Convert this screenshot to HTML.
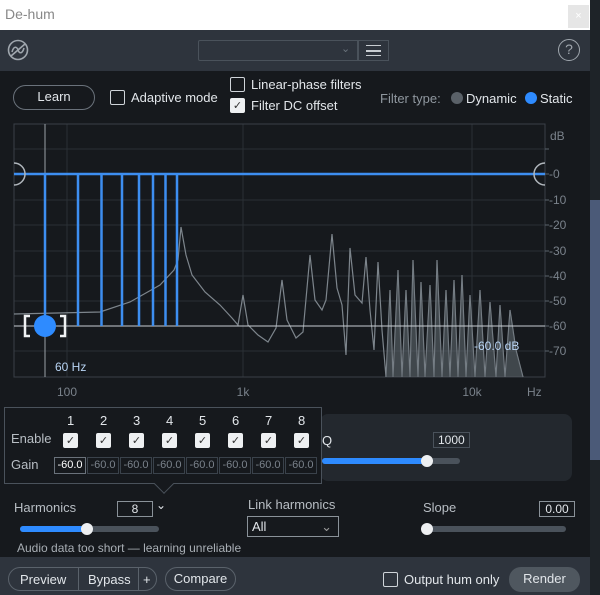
<!DOCTYPE html>
<html><head><meta charset="utf-8"><style>
*{box-sizing:border-box;margin:0;padding:0}
body{width:600px;height:595px;overflow:hidden;background:#3a4048;font-family:"Liberation Sans",sans-serif;position:relative;color:#d8dde3}
.abs{position:absolute}
.t{font-size:13px;color:#e2e6ea;white-space:nowrap}
.cb{position:absolute;width:15px;height:15px;border:1.5px solid #cfd4d9;border-radius:2px}
.cbk{background:#eef0f2;border-color:#eef0f2;color:#333;font-size:11px;text-align:center;line-height:14px}
.g{position:absolute;font-size:11px;color:#7a828b;width:32px;height:17px;border:1px solid #3a424b;text-align:center;line-height:15px}
</style></head><body>
<div class="abs" style="left:0;top:0;width:590px;height:30px;background:#fff"></div>
<div class="abs t" style="left:5px;top:6px;color:#888;font-size:14px">De-hum</div>
<div class="abs" style="left:568px;top:5px;width:21px;height:23px;background:#e6e6e6;color:#fff;font-size:11px;text-align:center;line-height:23px">×</div>
<div class="abs" style="left:590px;top:0;width:10px;height:595px;background:#1e2328"></div>
<div class="abs" style="left:590px;top:200px;width:10px;height:260px;background:#4b5a78"></div>
<div class="abs" style="left:0;top:30px;width:590px;height:565px;background:#16191d"></div>
<div class="abs" style="left:0;top:30px;width:590px;height:41px;background:#2e343d"></div>
<svg class="abs" style="left:7px;top:39px" width="22" height="22"><circle cx="11" cy="11" r="9.5" fill="none" stroke="#a0a7ae" stroke-width="1.6"/><path d="M4 17 L18 5 M5 13 C7 6 10 8 11 11 C12 14 15 16 17 9" fill="none" stroke="#a0a7ae" stroke-width="1.6"/></svg>
<div class="abs" style="left:198px;top:40px;width:160px;height:21px;border:1px solid #4a525b;border-radius:2px 0 0 2px"></div>
<div class="abs" style="left:341px;top:42px;color:#6a737c;font-size:11px">⌄</div>
<div class="abs" style="left:358px;top:40px;width:31px;height:21px;border:1px solid #4a525b"></div>
<div class="abs" style="left:366px;top:45px;width:15px;height:11px;border-top:1.5px solid #c8cdd2;border-bottom:1.5px solid #c8cdd2"></div>
<div class="abs" style="left:366px;top:50px;width:15px;height:1.5px;background:#c8cdd2"></div>
<div class="abs" style="left:558px;top:39px;width:22px;height:22px;border:1.5px solid #a0a7ae;border-radius:50%;color:#a0a7ae;font-size:14px;text-align:center;line-height:19px">?</div>

<div class="abs t" style="left:13px;top:85px;width:82px;height:25px;border:1.5px solid #6a727b;border-radius:13px;text-align:center;line-height:22px">Learn</div>
<div class="cb" style="left:110px;top:90px"></div><div class="abs t" style="left:131px;top:90px">Adaptive mode</div>
<div class="cb" style="left:230px;top:77px"></div><div class="abs t" style="left:251px;top:77px">Linear-phase filters</div>
<div class="cb cbk" style="left:230px;top:98px">✓</div><div class="abs t" style="left:251px;top:98px">Filter DC offset</div>
<div class="abs t" style="left:380px;top:91px;color:#8f979f">Filter type:</div>
<div class="abs" style="left:451px;top:92px;width:12px;height:12px;border-radius:50%;background:#5a6168"></div>
<div class="abs t" style="left:466px;top:91px">Dynamic</div>
<div class="abs" style="left:525px;top:92px;width:12px;height:12px;border-radius:50%;background:#2e8bff"></div>
<div class="abs t" style="left:540px;top:91px">Static</div>

<svg class="abs" style="left:0;top:120px" width="590" height="280" font-family="Liberation Sans" font-size="11">
<g stroke="#2a2f35" stroke-width="1">
<line x1="14" y1="29" x2="545" y2="29"/><line x1="14" y1="80" x2="545" y2="80"/><line x1="14" y1="105" x2="545" y2="105"/><line x1="14" y1="131" x2="545" y2="131"/><line x1="14" y1="156" x2="545" y2="156"/><line x1="14" y1="181" x2="545" y2="181"/><line x1="14" y1="231" x2="545" y2="231"/>
<line x1="67" y1="4" x2="67" y2="257"/><line x1="243" y1="4" x2="243" y2="257"/><line x1="472" y1="4" x2="472" y2="257"/>
</g>
<rect x="14" y="4" width="531" height="253" fill="none" stroke="#3a4048"/>
<g stroke="#5a626b"><line x1="545" y1="29" x2="549" y2="29"/><line x1="545" y1="54" x2="549" y2="54"/><line x1="545" y1="80" x2="549" y2="80"/><line x1="545" y1="105" x2="549" y2="105"/><line x1="545" y1="131" x2="549" y2="131"/><line x1="545" y1="156" x2="549" y2="156"/><line x1="545" y1="181" x2="549" y2="181"/><line x1="545" y1="206" x2="549" y2="206"/><line x1="545" y1="231" x2="549" y2="231"/></g>
<g fill="#7a828b" text-anchor="start" font-size="12"><text x="550" y="20">dB</text><text x="549" y="58">-0</text><text x="549" y="84">-10</text><text x="549" y="109">-20</text><text x="549" y="135">-30</text><text x="549" y="160">-40</text><text x="549" y="185">-50</text><text x="549" y="210">-60</text><text x="549" y="235">-70</text>
<text x="67" y="276" text-anchor="middle">100</text><text x="243" y="276" text-anchor="middle">1k</text><text x="472" y="276" text-anchor="middle">10k</text><text x="527" y="276">Hz</text></g>
<path d="M14 194 L100 192 L130 182 L160 165 L174 150 L178 140 L181 107 L186 135 L192 155 L205 172 L220 185 L232 198 L238 205 L243 175 L248 205 L258 215 L268 222 L276 208 L282 160 L287 200 L296 218 L303 212 L310 135 L315 180 L322 190 L326 180 L332 114 L337 168 L342 185 L346 235 L350 128 L355 175 L362 183 L366 137 L370 190 L374 230 L378 142 L382 210 L386 257 L390 170 L393 257 L398 150 L402 257 L406 170 L410 257 L413 140 L418 257 L421 162 L425 257 L430 165 L434 257 L437 140 L442 257 L446 170 L450 257 L454 160 L458 257 L462 155 L466 257 L470 175 L475 257 L480 170 L485 257 L490 182 L496 257 L500 185 L505 257 L510 190 L516 230 L523 257" fill="none" stroke="#7d858c" stroke-width="1.2"/>
<path d="M386 257 L390 170 L393 257 L398 150 L402 257 L406 170 L410 257 L413 140 L418 257 L421 162 L425 257 L430 165 L434 257 L437 140 L442 257 L446 170 L450 257 L454 160 L458 257 L462 155 L466 257 L470 175 L475 257 L480 170 L485 257 L490 182 L496 257 L500 185 L505 257 L510 190 L516 230 L523 257Z" fill="#5e666d" opacity="0.6"/>
<line x1="14" y1="206" x2="545" y2="206" stroke="#c8cdd2" stroke-width="1"/>
<line x1="45" y1="4" x2="45" y2="257" stroke="#9aa1a8" stroke-width="1"/>
<g stroke="#3d8ef0" stroke-width="2.5" fill="none">
<line x1="14" y1="54" x2="545" y2="54"/>
<path d="M45 54 V206 M78 54 V206 M101.5 54 V206 M122 54 V206 M139 54 V206 M153 54 V206 M165.5 54 V206 M177 54 V206"/>
</g>
<path d="M14 43 A11 11 0 0 1 14 65" fill="none" stroke="#b0b6bc" stroke-width="1.5"/>
<path d="M545 43 A11 11 0 0 0 545 65" fill="none" stroke="#b0b6bc" stroke-width="1.5"/>
<path d="M30 196 H25 V216 H30 M60 196 H65 V216 H60" fill="none" stroke="#f0f2f4" stroke-width="2.5"/>
<circle cx="45" cy="206" r="11" fill="#2e8bff"/>
<text x="55" y="251" fill="#b8d4f4" font-size="12">60 Hz</text>
<text x="474" y="230" fill="#b8d4f4" font-size="12">-60.0 dB</text>
</svg>

<div class="abs" style="left:320px;top:414px;width:252px;height:67px;background:#23282e;border-radius:8px"></div>
<div class="abs t" style="left:322px;top:433px">Q</div>
<div class="abs t" style="left:433px;top:432px;border:1px solid #4a525b;padding:0 4px;font-size:12px">1000</div>
<div class="abs" style="left:322px;top:458px;width:138px;height:6px;border-radius:3px;background:#4a525b"></div>
<div class="abs" style="left:322px;top:458px;width:106px;height:6px;border-radius:3px;background:#2e8bff"></div>
<div class="abs" style="left:421px;top:455px;width:12px;height:12px;border-radius:50%;background:#eef0f2;border:3px solid #eef0f2"></div>

<div class="abs" style="left:4px;top:407px;width:318px;height:77px;background:#16191d;border:1px solid #4a525b"></div>
<div class="abs" style="left:157px;top:477px;width:14px;height:14px;background:#16191d;border-right:1px solid #4a525b;border-bottom:1px solid #4a525b;transform:rotate(45deg)"></div>
<div class="abs t" style="left:11px;top:431px;color:#b8bec4">Enable</div>
<div class="abs t" style="left:11px;top:457px;color:#b8bec4">Gain</div>
<div class="abs t" style="left:67px;top:413px">1</div><div class="abs t" style="left:100px;top:413px">2</div><div class="abs t" style="left:133px;top:413px">3</div><div class="abs t" style="left:166px;top:413px">4</div><div class="abs t" style="left:199px;top:413px">5</div><div class="abs t" style="left:232px;top:413px">6</div><div class="abs t" style="left:265px;top:413px">7</div><div class="abs t" style="left:298px;top:413px">8</div>
<div class="cb cbk" style="left:63px;top:433px">✓</div><div class="cb cbk" style="left:96px;top:433px">✓</div><div class="cb cbk" style="left:129px;top:433px">✓</div><div class="cb cbk" style="left:162px;top:433px">✓</div><div class="cb cbk" style="left:195px;top:433px">✓</div><div class="cb cbk" style="left:228px;top:433px">✓</div><div class="cb cbk" style="left:261px;top:433px">✓</div><div class="cb cbk" style="left:294px;top:433px">✓</div>
<div class="g" style="left:54px;top:457px;color:#fff;border-color:#6a727b">-60.0</div><div class="g" style="left:87px;top:457px">-60.0</div><div class="g" style="left:120px;top:457px">-60.0</div><div class="g" style="left:153px;top:457px">-60.0</div><div class="g" style="left:186px;top:457px">-60.0</div><div class="g" style="left:219px;top:457px">-60.0</div><div class="g" style="left:252px;top:457px">-60.0</div><div class="g" style="left:285px;top:457px">-60.0</div>

<div class="abs t" style="left:14px;top:500px;color:#b8bec4">Harmonics</div>
<div class="abs t" style="left:117px;top:501px;width:36px;height:16px;border:1px solid #8a9299;text-align:center;line-height:14px;font-size:12px">8</div>
<div class="abs t" style="left:156px;top:498px;font-size:12px">⌄</div>
<div class="abs" style="left:20px;top:526px;width:139px;height:6px;border-radius:3px;background:#4a525b"></div>
<div class="abs" style="left:20px;top:526px;width:67px;height:6px;border-radius:3px;background:#2e8bff"></div>
<div class="abs" style="left:81px;top:523px;width:12px;height:12px;border-radius:50%;background:#eef0f2"></div>
<div class="abs t" style="left:17px;top:541px;color:#a8aeb4;font-size:12px">Audio data too short — learning unreliable</div>
<div class="abs t" style="left:248px;top:497px;color:#b8bec4">Link harmonics</div>
<div class="abs t" style="left:247px;top:516px;width:92px;height:21px;border:1px solid #8a9299;padding-left:4px;line-height:19px">All<span style="position:absolute;right:6px;color:#999">⌄</span></div>
<div class="abs t" style="left:423px;top:500px;color:#b8bec4">Slope</div>
<div class="abs t" style="left:539px;top:501px;width:36px;height:16px;border:1px solid #8a9299;text-align:center;line-height:14px;font-size:12px">0.00</div>
<div class="abs" style="left:423px;top:526px;width:143px;height:6px;border-radius:3px;background:#4a525b"></div>
<div class="abs" style="left:421px;top:523px;width:12px;height:12px;border-radius:50%;background:#eef0f2"></div>

<div class="abs" style="left:0;top:557px;width:590px;height:38px;background:#2e343d"></div>
<div class="abs" style="left:8px;top:567px;width:149px;height:24px;border:1px solid #5a626b;border-radius:12px"></div>
<div class="abs t" style="left:20px;top:572px">Preview</div>
<div class="abs" style="left:78px;top:567px;width:1px;height:24px;background:#5a626b"></div>
<div class="abs t" style="left:88px;top:572px">Bypass</div>
<div class="abs" style="left:138px;top:567px;width:1px;height:24px;background:#5a626b"></div>
<div class="abs t" style="left:143px;top:572px">+</div>
<div class="abs t" style="left:165px;top:567px;width:71px;height:24px;border:1px solid #5a626b;border-radius:12px;text-align:center;line-height:22px">Compare</div>
<div class="cb" style="left:383px;top:572px"></div>
<div class="abs t" style="left:404px;top:572px">Output hum only</div>
<div class="abs t" style="left:509px;top:567px;width:71px;height:25px;background:#4f575f;border-radius:12px;text-align:center;line-height:24px">Render</div>
</body></html>
